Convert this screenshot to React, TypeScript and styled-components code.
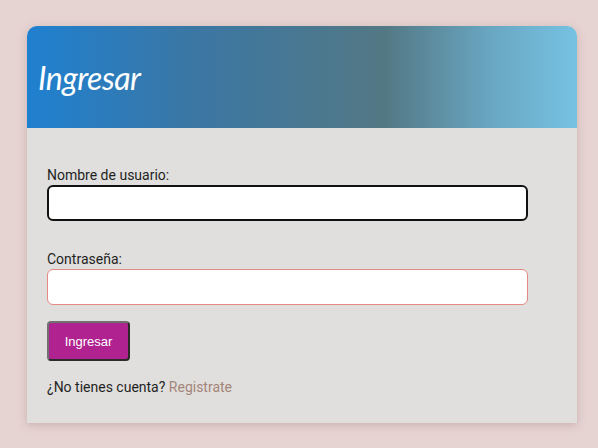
import styled, { createGlobalStyle } from 'styled-components';

const GlobalStyle = createGlobalStyle`
  html, body {
    margin: 0;
    padding: 0;
    background: #e6d4d2;
  }
  body {
    font-family: Roboto, "Liberation Sans", sans-serif;
  }
`;

const Page = styled.div`
  padding: 26px 21px 24px 27px;
  min-height: 448px;
  box-sizing: border-box;
`;

const Card = styled.section`
  width: 550px;
  background: #e0dfdd;
  border-radius: 10px 10px 0 0;
  box-shadow: 0 2px 8px rgba(150, 110, 105, 0.35);
  overflow: hidden;
`;

const Header = styled.header`
  height: 102px;
  display: flex;
  align-items: center;
  padding: 0 11px;
  background: linear-gradient(90deg, #1f80d0 0%, #3b77a4 30%, #537884 65%, #6aa8c4 85%, #76c2e2 100%);
`;

const Title = styled.h1`
  margin: 0;
  font-family: Lato, "Open Sans", sans-serif;
  font-style: italic;
  font-weight: 400;
  font-size: 32px;
  color: #ffffff;
  letter-spacing: -0.5px;
`;

const Form = styled.form`
  display: flex;
  flex-direction: column;
  padding: 39px 20px 27px;
`;

const Field = styled.label`
  display: flex;
  flex-direction: column;
  gap: 2px;
  font-size: 14px;
  line-height: 16px;
  color: #1f1f1f;
  margin-bottom: 30px;

  &:last-of-type {
    margin-bottom: 16px;
  }
`;

const Input = styled.input<{ $focused?: boolean }>`
  box-sizing: border-box;
  width: 481px;
  height: 36px;
  background: #ffffff;
  border-radius: 6px;
  padding: 0 10px;
  outline: none;
  border: ${({ $focused }) => ($focused ? '2px solid #111111' : '1px solid #e58a82')};
`;

const Submit = styled.button`
  align-self: flex-start;
  width: 83px;
  height: 40px;
  background: #b0228f;
  color: #ffffff;
  border: 2px solid;
  border-color: #707070 #2a2a2a #2a2a2a #707070;
  border-radius: 4px;
  font-family: "Liberation Sans", Arial, sans-serif;
  font-size: 13px;
  cursor: pointer;
`;

const Footer = styled.p`
  margin: 17px 0 0;
  font-size: 14px;
  line-height: 18px;
  color: #1f1f1f;
`;

const Link = styled.a`
  color: #a4857a;
  text-decoration: none;
`;

export default function App() {
  return (
    <>
      <GlobalStyle />
      <Page>
        <Card>
          <Header>
            <Title>Ingresar</Title>
          </Header>
          <Form onSubmit={(e) => e.preventDefault()}>
            <Field>
              Nombre de usuario:
              <Input $focused type="text" />
            </Field>
            <Field>
              Contraseña:
              <Input type="password" />
            </Field>
            <Submit type="submit">Ingresar</Submit>
            <Footer>
              ¿No tienes cuenta? <Link href="#">Registrate</Link>
            </Footer>
          </Form>
        </Card>
      </Page>
    </>
  );
}
